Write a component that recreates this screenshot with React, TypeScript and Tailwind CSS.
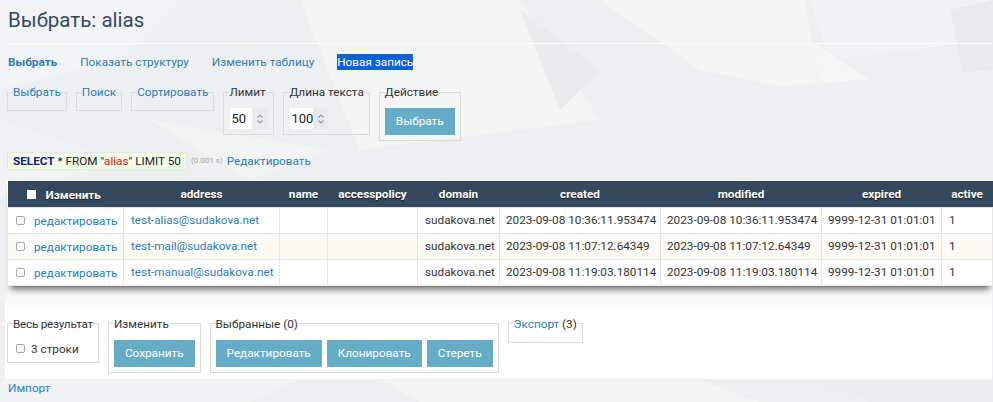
import React from "react";

const COLS = [
  { key: "sel", label: "Изменить", w: "w-[116px]" },
  { key: "address", label: "address", w: "w-[156px]" },
  { key: "name", label: "name", w: "w-[48px]" },
  { key: "accesspolicy", label: "accesspolicy", w: "w-[90px]" },
  { key: "domain", label: "domain", w: "w-[82px]" },
  { key: "created", label: "created", w: "w-[161px]" },
  { key: "modified", label: "modified", w: "w-[161px]" },
  { key: "expired", label: "expired", w: "w-[120px]" },
  { key: "active", label: "active", w: "w-[51px]" },
];

const ROWS = [
  {
    address: "test-alias@sudakova.net",
    created: "2023-09-08 10:36:11.953474",
    modified: "2023-09-08 10:36:11.953474",
  },
  {
    address: "test-mail@sudakova.net",
    created: "2023-09-08 11:07:12.64349",
    modified: "2023-09-08 11:07:12.64349",
  },
  {
    address: "test-manual@sudakova.net",
    created: "2023-09-08 11:19:03.180114",
    modified: "2023-09-08 11:19:03.180114",
  },
];

function Spinner() {
  return (
    <span className="flex h-full w-[16px] items-center justify-center bg-[#e9e9ee]">
      <svg width="8" height="12" viewBox="0 0 8 12" fill="none" stroke="#9a9aa2" strokeWidth="1.1">
        <path d="M1.5 4.5 L4 2 L6.5 4.5" />
        <path d="M1.5 7.5 L4 10 L6.5 7.5" />
      </svg>
    </span>
  );
}

function NumberBox({ value }: { value: string }) {
  return (
    <div className="flex h-[21px] w-[38px] items-center bg-white">
      <span className="flex-1 pl-[1px] text-[13px] leading-4 text-[#222]">{value}</span>
      <Spinner />
    </div>
  );
}

function Btn({ children }: { children: React.ReactNode }) {
  return (
    <button className="h-[27px] bg-[#65acc6] px-[11px] text-[11.75px] text-white">{children}</button>
  );
}

function Box({ legend, children, pb = "pb-[5px]" }: { legend: React.ReactNode; children?: React.ReactNode; pb?: string }) {
  return (
    <fieldset className={`border border-[#d9dcdd] px-[5px] ${pb}`}>
      <legend className="text-[11.75px] leading-4 text-[#333]">{legend}</legend>
      {children}
    </fieldset>
  );
}

function RowCheck() {
  return <span className="inline-block h-[9px] w-[9px] rounded-[2px] border border-[#a9a9a9] bg-white align-middle" />;
}

export default function App() {
  return (
    <div className="relative min-h-screen overflow-hidden bg-[#edeff0]" style={{ fontFamily: "Roboto, 'Noto Sans', sans-serif" }}>
      {/* faint polygon texture */}
      <svg className="pointer-events-none absolute inset-0 h-full w-full" viewBox="0 0 993 402" preserveAspectRatio="none">
        <polygon points="0,0 180,0 120,60 0,90" fill="#f2f3f4" />
        <polygon points="300,0 520,0 600,120 360,150" fill="#f3f4f4" />
        <polygon points="600,0 805,0 820,95 700,70" fill="#f4f5f5" />
        <polygon points="520,10 600,70 560,110" fill="#e9ebec" />
        <polygon points="810,0 993,0 993,40 830,60" fill="#f1f2f3" />
        <polygon points="950,10 993,0 993,100 965,80" fill="#e8eaeb" />
        <polygon points="810,40 900,100 830,130" fill="#f5f6f6" />
        <polygon points="660,95 993,70 993,160 720,150" fill="#eff0f1" />
        <polygon points="0,120 120,160 0,200" fill="#f1f2f3" />
        <polygon points="150,120 330,150 250,180" fill="#f2f3f3" />
        <polygon points="0,380 300,380 250,402 0,402" fill="#f1f2f3" />
        <polygon points="380,380 700,380 760,402 420,402" fill="#f3f4f4" />
        <polygon points="820,380 993,380 993,402 870,402" fill="#eaeced" />
      </svg>

      <div className="relative pl-[7px] pr-[1px]">
        <h2 className="ml-[1px] border-b border-[#fafbfb] pt-[7px] pb-[10px] text-[20.5px] leading-[26px] text-[#34495e]">
          Выбрать: alias
        </h2>

        <nav className="mt-[10px] ml-[1px] flex gap-[23px] text-[11.75px] leading-4 text-[#2980b9]">
          <a className="font-bold">Выбрать</a>
          <a>Показать структуру</a>
          <a>Изменить таблицу</a>
          <a className="bg-[#0a63d0] text-white">Новая запись</a>
        </nav>

        <div className="mt-[14px] flex items-start gap-[9px]">
          <Box legend={<a className="text-[#2980b9]">Выбрать</a>} pb="pb-[10px]" />
          <Box legend={<a className="text-[#2980b9]">Поиск</a>} pb="pb-[10px]" />
          <Box legend={<a className="text-[#2980b9]">Сортировать</a>} pb="pb-[10px]" />
          <Box legend="Лимит">
            <div className="mt-[8px] pl-[1px]">
              <NumberBox value="50" />
            </div>
          </Box>
          <Box legend="Длина текста">
            <div className="mt-[8px] pl-[1px]">
              <NumberBox value="100" />
            </div>
          </Box>
          <Box legend="Действие">
            <div className="mt-[8px]">
              <Btn>Выбрать</Btn>
            </div>
          </Box>
        </div>

        <div className="mt-[11px] flex items-center text-[11.75px] leading-4">
          <code className="border border-[#e0efd2] bg-[#f1fbe9] px-[5px] py-[0px] text-[#222]" style={{ fontFamily: "Roboto, sans-serif" }}>
            <b className="text-[#1b1b78]">SELECT</b> * FROM "<span className="text-[#e8120c]">alias</span>" LIMIT 50
          </code>
          <span className="ml-[4px] text-[8px] text-[#aaa]">(0.001 s)</span>
          <a className="ml-[4px] text-[#2980b9]">Редактировать</a>
        </div>

        <table className="relative z-10 mt-[11px] w-[985px] table-fixed border-collapse bg-white text-[11.75px] leading-4 text-[#333] shadow-[0_7px_6px_-4px_rgba(0,0,0,0.55)]">
          <thead>
            <tr className="h-[26px] bg-[#34495e] text-white [text-shadow:0_1px_1px_rgba(0,0,0,0.6)]">
              {COLS.map((c) =>
                c.key === "sel" ? (
                  <th key={c.key} className={`${c.w} pl-[19px] text-left font-bold`}>
                    <span className="mr-[10px] inline-block h-[9px] w-[9px] bg-white align-middle" />
                    <span className="align-middle">{c.label}</span>
                  </th>
                ) : (
                  <th key={c.key} className={`${c.w} px-[6px] text-center font-bold`}>
                    {c.label}
                  </th>
                )
              )}
            </tr>
          </thead>
          <tbody>
            {ROWS.map((r, i) => (
              <tr key={r.address} className={`h-[26px] ${i === 1 ? "bg-[#fbfaf4]" : "bg-white"}`}>
                <td className="border border-[#e6e6e6] pl-[8px] whitespace-nowrap">
                  <RowCheck />
                  <a className="ml-[9px] align-middle text-[#2980b9]">редактировать</a>
                </td>
                <td className="border border-[#e6e6e6] px-[7px] whitespace-nowrap">
                  <a className="text-[#2980b9]">{r.address}</a>
                </td>
                <td className="border border-[#e6e6e6]" />
                <td className="border border-[#e6e6e6]" />
                <td className="border border-[#e6e6e6] px-[7px] whitespace-nowrap">sudakova.net</td>
                <td className="border border-[#e6e6e6] px-[6px] whitespace-nowrap">{r.created}</td>
                <td className="border border-[#e6e6e6] px-[6px] whitespace-nowrap">{r.modified}</td>
                <td className="border border-[#e6e6e6] px-[6px] whitespace-nowrap">9999-12-31 01:01:01</td>
                <td className="border border-[#e6e6e6] px-[7px]">1</td>
              </tr>
            ))}
          </tbody>
        </table>

        <div className="-ml-[2px] bg-linear-to-b from-[#eceeee] via-white via-25% to-white pt-[30px] pb-[6px] pl-[2px]">
          <div className="flex items-start gap-[9px]">
            <Box legend={<span className="tracking-[-0.25px]">Весь результат</span>}>
              <label className="mt-[9px] flex items-center gap-[6px] pl-[3px] text-[11.75px] leading-4 text-[#333]">
                <RowCheck />
                3 строки
              </label>
            </Box>
            <Box legend="Изменить">
              <div className="mt-[8px]">
                <Btn>Сохранить</Btn>
              </div>
            </Box>
            <Box legend="Выбранные (0)">
              <div className="mt-[8px] flex gap-[5px]">
                <Btn>Редактировать</Btn>
                <Btn>Клонировать</Btn>
                <Btn>Стереть</Btn>
              </div>
            </Box>
            <Box legend={<><a className="text-[#2980b9]">Экспорт</a> (3)</>} pb="pb-[10px]" />
          </div>
        </div>

        <div className="mt-[1px] ml-[1px] text-[11.75px] leading-4 text-[#2980b9]">
          <a>Импорт</a>
        </div>
      </div>
    </div>
  );
}
